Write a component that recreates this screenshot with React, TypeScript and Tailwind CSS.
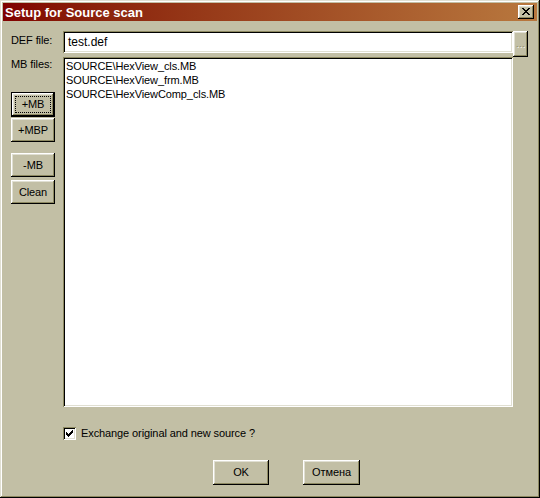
import React from "react";

// classic 3D bevels (Brick scheme)
const raised =
  "shadow-[inset_-1px_-1px_#000,inset_1px_1px_#fff,inset_-2px_-2px_#8d8961,inset_2px_2px_#e0dfd2]";
const sunken =
  "shadow-[inset_1px_1px_#8d8961,inset_-1px_-1px_#fff,inset_2px_2px_#000,inset_-2px_-2px_#e0dfd2]";

function Pixels({ rows, className }: { rows: string[]; className?: string }) {
  const w = rows[0].length;
  const h = rows.length;
  return (
    <svg width={w} height={h} viewBox={`0 0 ${w} ${h}`} className={className} shapeRendering="crispEdges">
      {rows.map((r, y) =>
        r.split("").map((c, x) => (c === "X" ? <rect key={`${x}-${y}`} x={x} y={y} width={1} height={1} fill="#000" /> : null))
      )}
    </svg>
  );
}

const closeGlyph = ["XX....XX", ".XX..XX.", "..XXXX..", "...XX...", "..XXXX..", ".XX..XX.", "XX....XX"];
const checkGlyph = ["......X", ".....XX", "X...XXX", "XX.XXX.", "XXXXX..", ".XXX...", "..X...."];

function Button({
  label,
  className,
  isDefault,
}: {
  label: string;
  className: string;
  isDefault?: boolean;
}) {
  if (isDefault) {
    return (
      <div className={`${className} border border-black`}>
        <div className={`relative flex h-full w-full items-center justify-center bg-[#c2bfa5] ${raised}`}>
          <span className="absolute inset-[3px] border border-dotted border-black" />
          <span>{label}</span>
        </div>
      </div>
    );
  }
  return <div className={`${className} flex items-center justify-center bg-[#c2bfa5] ${raised}`}>{label}</div>;
}

const files = ["SOURCE\\HexView_cls.MB", "SOURCE\\HexView_frm.MB", "SOURCE\\HexViewComp_cls.MB"];

export default function App() {
  return (
    <div className="h-[498px] w-[540px] font-['Liberation_Sans',Arial,sans-serif] text-[11px] tracking-[-0.1px] text-black">
      <div className="flex h-full w-full flex-col bg-[#c2bfa5] p-[3px] shadow-[inset_-1px_-1px_#000,inset_1px_1px_#e0dfd2,inset_-2px_-2px_#8d8961,inset_2px_2px_#fff]">
        {/* Title bar */}
        <div className="flex h-[18px] items-center justify-between bg-gradient-to-r from-[#800000] to-[#b8783e] pl-[2px] pr-[3px]">
          <span className="pt-[1px] text-[13px] font-bold leading-none tracking-normal text-white">Setup for Source scan</span>
          <div className={`flex h-[14px] w-[16px] items-center justify-center bg-[#c2bfa5] ${raised}`}>
            <Pixels rows={closeGlyph} className="-mt-[1px]" />
          </div>
        </div>

        {/* Body */}
        <div className="flex flex-col pl-[8px] pt-[10px]">
          {/* DEF file row */}
          <div className="flex h-[26px] items-start">
            <div className="w-[52px] pt-[3px] leading-[13px]">DEF file:</div>
            <div className={`flex h-[22px] w-[450px] items-center bg-white pl-[5px] text-[12px] tracking-normal ${sunken}`}>
              test.def
            </div>
            <div className={`relative flex h-[26px] w-[15px] items-center justify-center bg-[#c2bfa5] ${raised}`}>
              <span className="text-[9px] leading-none tracking-[0.5px] text-[#8d8961] [text-shadow:1px_1px_#fff]">...</span>
            </div>
          </div>

          {/* MB files row */}
          <div className="flex">
            <div className="flex w-[52px] flex-col">
              <div className="pt-[1px] leading-[13px]">MB files:</div>
              <Button label="+MB" isDefault className="mt-[21px] h-[25px] w-[44px]" />
              <Button label="+MBP" className="mt-[1px] h-[24px] w-[44px]" />
              <Button label="-MB" className="mt-[11px] h-[24px] w-[44px]" />
              <Button label="Clean" className="mt-[3px] h-[24px] w-[44px]" />
            </div>
            <div className={`h-[350px] w-[450px] bg-white pl-[3px] pt-[2px] leading-[14px] ${sunken}`}>
              {files.map((f) => (
                <div key={f}>{f}</div>
              ))}
            </div>
          </div>

          {/* Checkbox */}
          <div className="ml-[52px] mt-[20px] flex h-[13px] items-center gap-[5px]">
            <div className={`flex h-[13px] w-[13px] items-center justify-center bg-white ${sunken}`}>
              <Pixels rows={checkGlyph} />
            </div>
            <span className="leading-none">Exchange original and new source ?</span>
          </div>

          {/* Dialog buttons */}
          <div className="mt-[20px] flex">
            <Button label="OK" className="ml-[202px] h-[25px] w-[56px]" />
            <Button label="Отмена" className="ml-[34px] h-[25px] w-[57px]" />
          </div>
        </div>
      </div>
    </div>
  );
}
